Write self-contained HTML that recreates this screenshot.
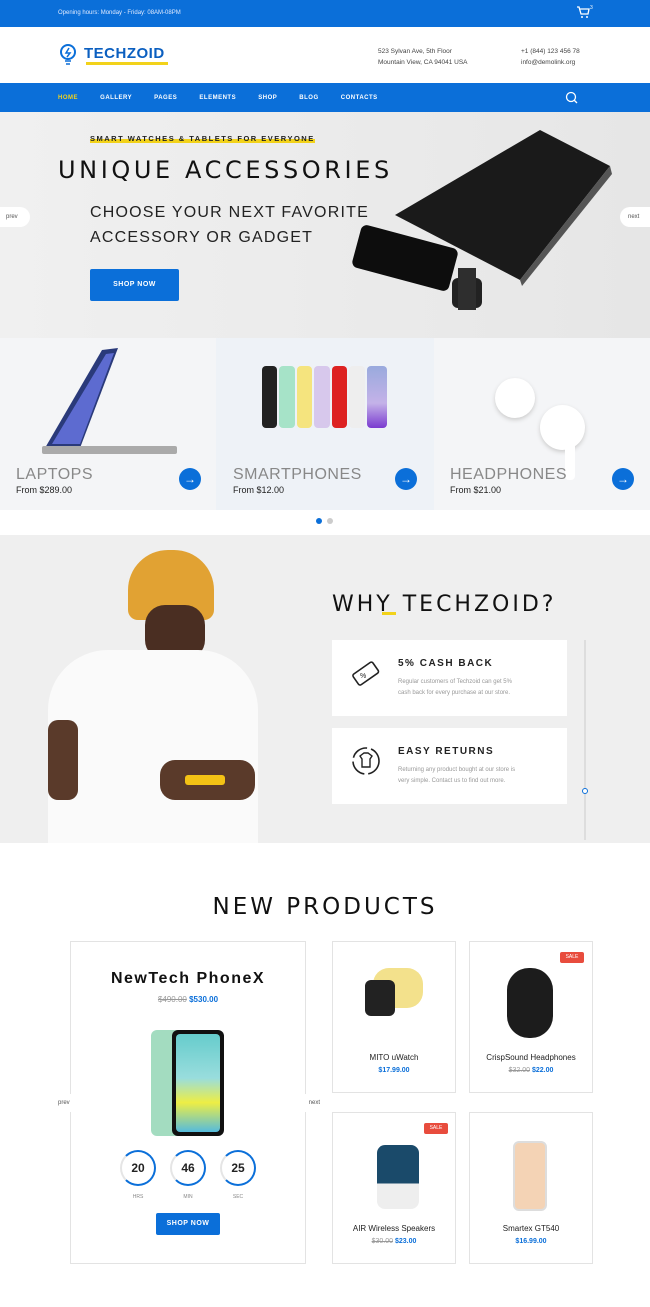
<!DOCTYPE html>
<html><head><meta charset="utf-8"><style>
*{margin:0;padding:0;box-sizing:border-box}
body{width:650px;height:1307px;overflow:hidden;font-family:"Liberation Sans",sans-serif;background:#fff;position:relative;color:#222}
.a{position:absolute}
.blue{background:#0b6fd9}
.ttl{font-family:"DejaVu Sans","Liberation Sans",sans-serif;letter-spacing:3px;color:#111}
.card{background:#fff;border:1px solid #e3e3e3}
.btn{background:#0b6fd9;color:#fff;font-size:7px;font-weight:bold;text-align:center;border-radius:2px;letter-spacing:.5px}
.circ{width:22px;height:22px;border-radius:50%;background:#0b6fd9;color:#fff;font-size:12px;text-align:center;line-height:22px}
.cat{font-size:16px;color:#888;letter-spacing:.5px}
.from{font-size:9px;color:#222}
.pn{font-size:8px;color:#222;text-align:center}
.pp{font-size:7px;color:#0b6fd9;text-align:center;font-weight:bold}
.tm{width:36px;height:36px;border-radius:50%;border:2px solid #0b6fd9;border-left-color:#e5e5e5;text-align:center;line-height:32px;font-weight:bold;font-size:12px}
</style></head><body>
<div class="a blue" style="left:0;top:0;width:650px;height:27px"></div>
<div class="a" style="left:58px;top:10px;font-size:6px;color:#dfeaff">Opening hours: Monday - Friday: 08AM-08PM</div>
<svg class="a" style="left:576px;top:6px" width="14" height="13" viewBox="0 0 14 13"><path d="M1 1h2l2 7h7l1-5H4" fill="none" stroke="#fff" stroke-width="1.3"/><circle cx="6" cy="11" r="1" fill="#fff"/><circle cx="11" cy="11" r="1" fill="#fff"/></svg>
<div class="a" style="left:590px;top:5px;font-size:5px;color:#fff">3</div>

<svg class="a" style="left:57px;top:42px" width="22" height="26" viewBox="0 0 22 26"><circle cx="11" cy="10" r="7" fill="none" stroke="#0b6fd9" stroke-width="2"/><path d="M8 19h6M9 22h4M12 6l-3 5h4l-3 4" fill="none" stroke="#0b6fd9" stroke-width="1.5"/></svg>
<div class="a" style="left:84px;top:45px;font-size:15px;font-weight:bold;color:#0b5fc0;letter-spacing:.5px">TECHZOID</div>
<div class="a" style="left:86px;top:62px;width:82px;height:3px;background:#f2d21a"></div>
<div class="a" style="left:378px;top:46px;font-size:6.5px;color:#444;line-height:11px">523 Sylvan Ave, 5th Floor<br>Mountain View, CA 94041 USA</div>
<div class="a" style="left:521px;top:46px;font-size:6.5px;color:#444;line-height:11px">+1 (844) 123 456 78<br>info@demolink.org</div>

<div class="a blue" style="left:0;top:83px;width:650px;height:29px"></div>
<div class="a" style="left:58px;top:95px;font-size:6px;font-weight:bold;color:#fff;word-spacing:20px;letter-spacing:.5px"><span style="color:#f2d21a">HOME</span> GALLERY PAGES ELEMENTS SHOP BLOG CONTACTS</div>
<svg class="a" style="left:565px;top:91px" width="13" height="13"><circle cx="6" cy="6" r="4.5" fill="none" stroke="#fff" stroke-width="1.3"/><path d="M9 9l3 3" stroke="#fff" stroke-width="1.3"/></svg>

<div class="a" style="left:0;top:112px;width:650px;height:226px;background:linear-gradient(90deg,#f0f0f0,#e6e6e6)"></div>
<div class="a" style="left:90px;top:134px;font-size:7.5px;font-weight:bold;letter-spacing:1.5px;color:#222;background:linear-gradient(transparent 55%,#f2d21a 55%)">SMART WATCHES &amp; TABLETS FOR EVERYONE</div>
<div class="a ttl" style="left:58px;top:156px;font-size:24px;letter-spacing:3.6px">UNIQUE ACCESSORIES</div>
<div class="a" style="left:90px;top:200px;font-size:16px;letter-spacing:1.2px;color:#222;line-height:25px">CHOOSE YOUR NEXT FAVORITE<br>ACCESSORY OR GADGET</div>
<div class="a btn" style="left:90px;top:269px;width:89px;height:32px;line-height:32px">SHOP NOW</div>
<div class="a" style="left:0;top:207px;width:30px;height:20px;background:#fff;border-radius:0 10px 10px 0;font-size:6px;line-height:20px;padding-left:6px;color:#555">prev</div>
<div class="a" style="left:620px;top:207px;width:30px;height:20px;background:#fff;border-radius:10px 0 0 10px;font-size:6px;line-height:20px;padding-left:8px;color:#555">next</div>
<svg class="a" style="left:350px;top:128px" width="270" height="185"><polygon points="190,2 45,87 170,152 260,38" fill="#1a1a1a"/><polygon points="170,152 260,38 262,46 172,158" fill="#555"/><rect x="5" y="108" width="100" height="44" rx="6" transform="rotate(15 55 130)" fill="#0d0d0d"/><rect x="102" y="150" width="30" height="30" rx="6" fill="#222"/><rect x="108" y="140" width="18" height="42" fill="#2e2e2e"/></svg>

<div class="a" style="left:0;top:338px;width:650px;height:172px;background:#f4f5f7"></div>
<div class="a" style="left:216px;top:338px;width:218px;height:172px;background:#eef2f7"></div>
<svg class="a" style="left:40px;top:348px" width="140" height="110"><polygon points="62,2 78,0 40,100 5,100" fill="#2a3a7a"/><polygon points="66,6 74,5 40,96 12,96" fill="#5d6bd0"/><rect x="2" y="98" width="135" height="8" rx="2" fill="#aaa"/></svg>
<div class="a" style="left:262px;top:366px;width:125px;height:62px;display:flex;gap:2px"><div style="flex:1;background:#222;border-radius:4px"></div><div style="flex:1;background:#a6e3c8;border-radius:4px"></div><div style="flex:1;background:#f5e47e;border-radius:4px"></div><div style="flex:1;background:#d7c8ec;border-radius:4px"></div><div style="flex:1;background:#d22;border-radius:4px"></div><div style="flex:1;background:#eee;border-radius:4px"></div><div style="flex:1.3;background:linear-gradient(#9ad,#c4b2e8 60%,#7a3bd0);border-radius:4px"></div></div>
<div class="a" style="left:495px;top:378px;width:40px;height:40px;border-radius:50%;background:#fff;box-shadow:0 2px 4px #ccc"></div>
<div class="a" style="left:540px;top:405px;width:45px;height:45px;border-radius:50%;background:#fff;box-shadow:0 2px 4px #ccc"></div>
<div class="a" style="left:565px;top:440px;width:10px;height:40px;background:#fff;border-radius:4px"></div>
<div class="a cat" style="left:16px;top:466px">LAPTOPS</div><div class="a from" style="left:16px;top:485px">From $289.00</div><div class="a circ" style="left:179px;top:468px">→</div>
<div class="a cat" style="left:233px;top:466px">SMARTPHONES</div><div class="a from" style="left:233px;top:485px">From $12.00</div><div class="a circ" style="left:395px;top:468px">→</div>
<div class="a cat" style="left:450px;top:466px">HEADPHONES</div><div class="a from" style="left:450px;top:485px">From $21.00</div><div class="a circ" style="left:612px;top:468px">→</div>
<div class="a" style="left:316px;top:518px;width:6px;height:6px;border-radius:50%;background:#0b6fd9"></div>
<div class="a" style="left:327px;top:518px;width:6px;height:6px;border-radius:50%;background:#ccc"></div>

<div class="a" style="left:0;top:535px;width:650px;height:308px;background:#efefef"></div>
<div class="a" style="left:128px;top:550px;width:86px;height:70px;border-radius:40px 40px 10px 10px;background:#e1a233"></div>
<div class="a" style="left:145px;top:605px;width:60px;height:55px;border-radius:20px;background:#4a2e22"></div>
<div class="a" style="left:48px;top:650px;width:210px;height:193px;border-radius:60px 60px 0 0;background:#fafafa"></div>
<div class="a" style="left:48px;top:720px;width:30px;height:80px;background:#5a3a2a;border-radius:10px"></div>
<div class="a" style="left:160px;top:760px;width:95px;height:40px;background:#5a3a2a;border-radius:15px"></div>
<div class="a" style="left:185px;top:775px;width:40px;height:10px;background:#f3c215;border-radius:3px"></div>
<div class="a ttl" style="left:332px;top:592px;font-size:22px">WHY TECHZOID?</div>
<div class="a" style="left:382px;top:612px;width:14px;height:3px;background:#f2d21a"></div>
<div class="a" style="left:584px;top:640px;width:2px;height:200px;background:#ddd"></div>
<div class="a" style="left:582px;top:788px;width:6px;height:6px;border-radius:50%;border:1.5px solid #0b6fd9;background:#fff"></div>
<div class="a" style="left:332px;top:640px;width:235px;height:76px;background:#fff"></div>
<div class="a" style="left:332px;top:728px;width:235px;height:76px;background:#fff"></div>
<svg class="a" style="left:350px;top:658px" width="32" height="32"><rect x="4" y="9" width="24" height="13" rx="2" transform="rotate(-35 16 16)" fill="none" stroke="#222" stroke-width="1.6"/><text x="10" y="20" font-size="7" fill="#222">%</text></svg>
<svg class="a" style="left:350px;top:745px" width="32" height="32"><circle cx="16" cy="16" r="13" fill="none" stroke="#222" stroke-width="1.6" stroke-dasharray="18 4"/><path d="M10 11l4-3h4l4 3-2 3v8h-8v-8z" fill="none" stroke="#222" stroke-width="1.4"/></svg>
<div class="a" style="left:398px;top:658px;font-size:10px;font-weight:bold;letter-spacing:1.5px;color:#222">5% CASH BACK</div>
<div class="a" style="left:398px;top:677px;font-size:6px;color:#999;line-height:11px">Regular customers of Techzoid can get 5%<br>cash back for every purchase at our store.</div>
<div class="a" style="left:398px;top:746px;font-size:10px;font-weight:bold;letter-spacing:1.5px;color:#222">EASY RETURNS</div>
<div class="a" style="left:398px;top:765px;font-size:6px;color:#999;line-height:11px">Returning any product bought at our store is<br>very simple. Contact us to find out more.</div>

<div class="a ttl" style="left:0;width:650px;text-align:center;top:894px;font-size:23px">NEW PRODUCTS</div>
<div class="a card" style="left:70px;top:941px;width:236px;height:323px"></div>
<div class="a" style="left:70px;top:970px;width:236px;text-align:center;font-size:16px;font-weight:bold;letter-spacing:1.5px;color:#111">NewTech PhoneX</div>
<div class="a" style="left:70px;top:995px;width:236px;text-align:center;font-size:8px"><s style="color:#999">$490.00</s> <b style="color:#0b6fd9">$530.00</b></div>
<div class="a" style="left:151px;top:1030px;width:36px;height:106px;border-radius:6px;background:#a3dcc0"></div>
<div class="a" style="left:172px;top:1030px;width:52px;height:106px;border-radius:6px;background:#111"></div>
<div class="a" style="left:176px;top:1034px;width:44px;height:98px;border-radius:4px;background:linear-gradient(#6cc,#9dd 45%,#ee4 70%,#5bd)"></div>
<div class="a" style="left:58px;top:1094px;width:24px;height:18px;background:#fff;font-size:6px;line-height:18px;color:#555">prev</div>
<div class="a" style="left:296px;top:1094px;width:24px;height:18px;background:#fff;font-size:6px;line-height:18px;color:#555;text-align:right">next</div>
<div class="a tm" style="left:120px;top:1150px">20</div>
<div class="a tm" style="left:170px;top:1150px">46</div>
<div class="a tm" style="left:220px;top:1150px">25</div>
<div class="a" style="left:120px;top:1194px;width:36px;text-align:center;font-size:5px;color:#888">HRS</div>
<div class="a" style="left:170px;top:1194px;width:36px;text-align:center;font-size:5px;color:#888">MIN</div>
<div class="a" style="left:220px;top:1194px;width:36px;text-align:center;font-size:5px;color:#888">SEC</div>
<div class="a btn" style="left:156px;top:1213px;width:64px;height:22px;line-height:22px">SHOP NOW</div>

<div class="a card" style="left:332px;top:941px;width:124px;height:152px"></div>
<div class="a card" style="left:469px;top:941px;width:124px;height:152px"></div>
<div class="a card" style="left:332px;top:1112px;width:124px;height:152px"></div>
<div class="a card" style="left:469px;top:1112px;width:124px;height:152px"></div>
<div class="a" style="left:373px;top:968px;width:50px;height:40px;border-radius:16px;background:#f3e18c"></div>
<div class="a" style="left:365px;top:980px;width:30px;height:36px;border-radius:6px;background:#222"></div>
<div class="a pn" style="left:332px;top:1053px;width:124px">MITO uWatch</div>
<div class="a pp" style="left:332px;top:1067px;width:124px">$17.99.00</div>
<div class="a" style="left:560px;top:952px;width:24px;height:11px;background:#e84c3d;color:#fff;font-size:5px;text-align:center;line-height:11px;border-radius:2px">SALE</div>
<div class="a" style="left:507px;top:968px;width:46px;height:70px;border-radius:22px;background:#1c1c1c"></div>
<div class="a pn" style="left:469px;top:1053px;width:124px">CrispSound Headphones</div>
<div class="a" style="left:469px;top:1067px;width:124px;text-align:center;font-size:7px"><s style="color:#999">$32.00</s> <b style="color:#0b6fd9">$22.00</b></div>
<div class="a" style="left:424px;top:1123px;width:24px;height:11px;background:#e84c3d;color:#fff;font-size:5px;text-align:center;line-height:11px;border-radius:2px">SALE</div>
<div class="a" style="left:377px;top:1145px;width:42px;height:64px;border-radius:8px;background:linear-gradient(#1a4a6a 60%,#eee 60%)"></div>
<div class="a pn" style="left:332px;top:1224px;width:124px">AIR Wireless Speakers</div>
<div class="a" style="left:332px;top:1238px;width:124px;text-align:center;font-size:7px"><s style="color:#999">$30.00</s> <b style="color:#0b6fd9">$23.00</b></div>
<div class="a" style="left:513px;top:1141px;width:34px;height:70px;border-radius:6px;background:#f4d3b5;border:2px solid #ddd"></div>
<div class="a pn" style="left:469px;top:1224px;width:124px">Smartex GT540</div>
<div class="a pp" style="left:469px;top:1238px;width:124px">$16.99.00</div>
</body></html>
